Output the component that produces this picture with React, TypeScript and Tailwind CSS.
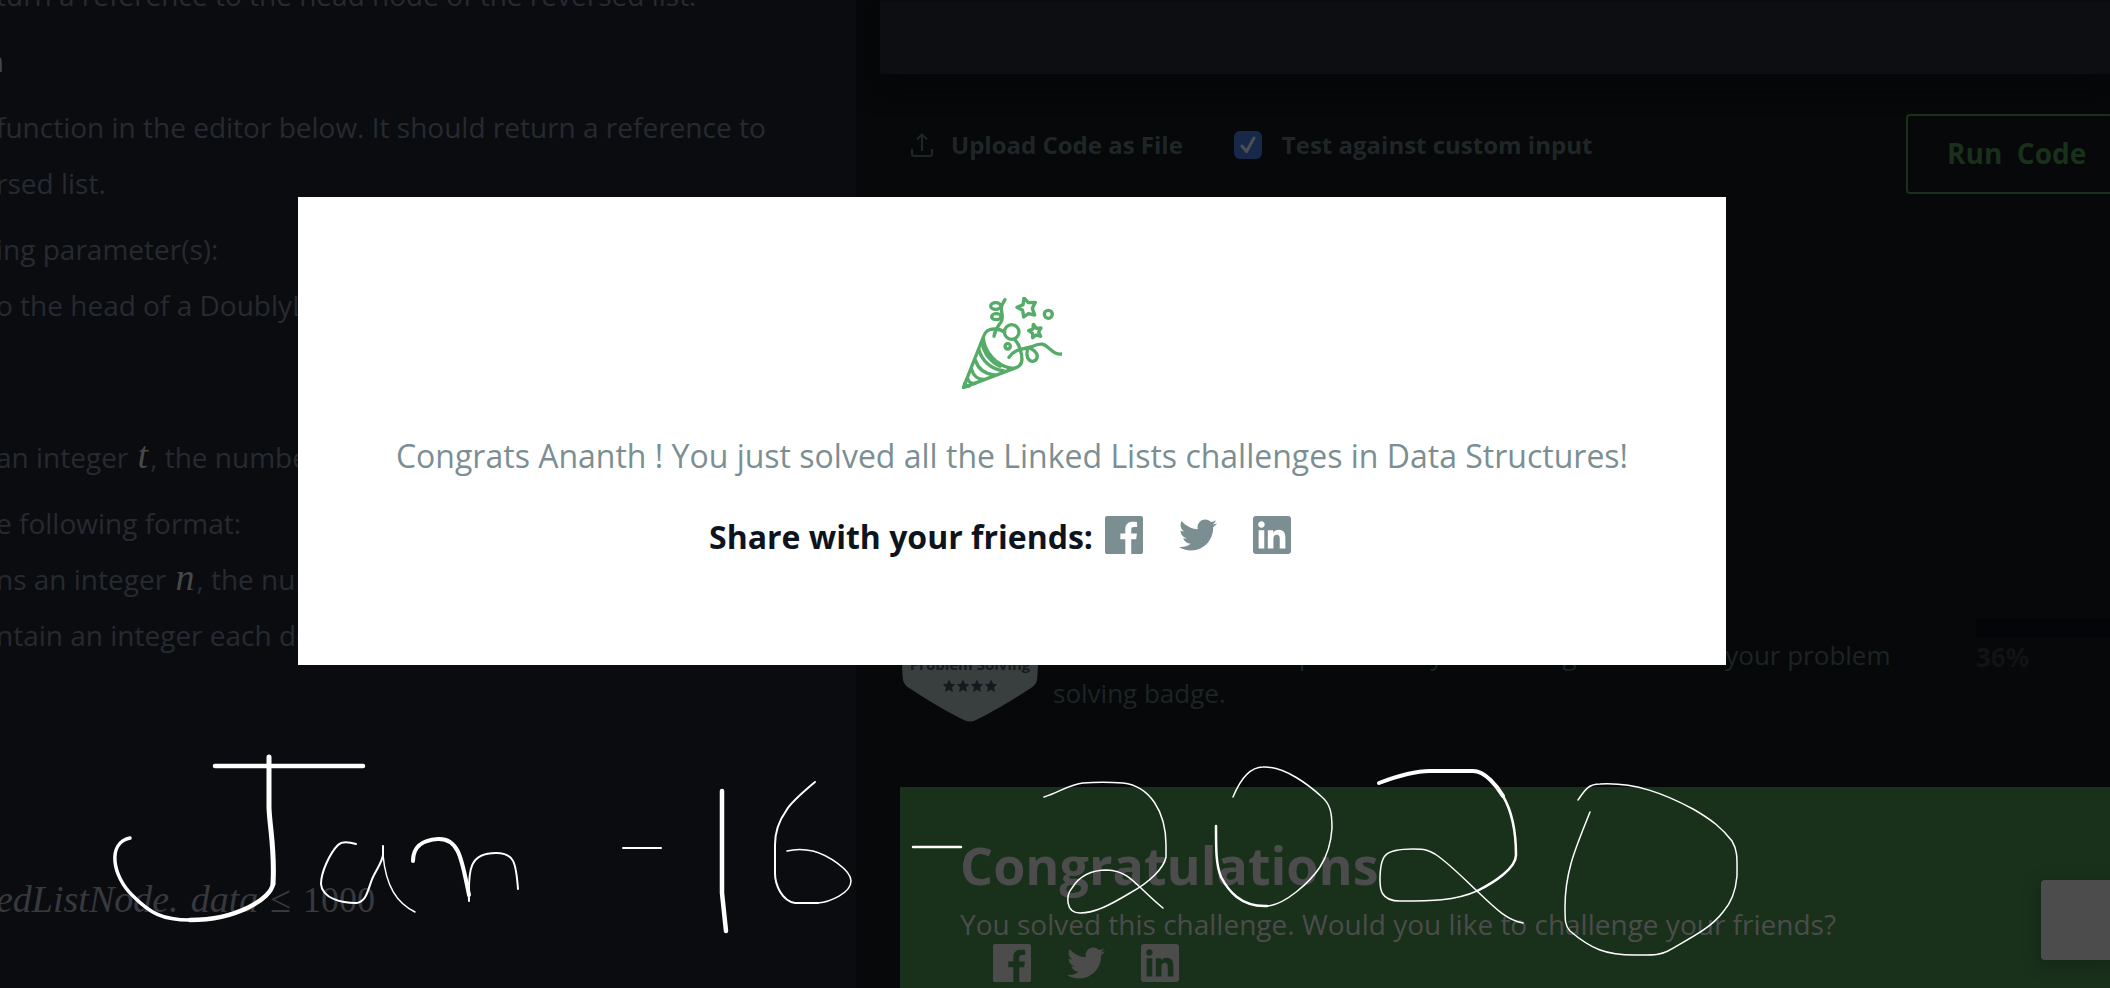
import React from "react";
import { FaTwitter } from "react-icons/fa";

const INK = [
  { w: 4.5, d: "M215 766H363" },
  { w: 5, d: "M269 757V808C270 830 275 850 273 884" },
  { w: 4.5, d: "M273 884C271 898 238 920 190 920" },
  { w: 3.5, d: "M190 920C162 920 150 913 133 896C112 876 107 843 130 838" },
  { w: 2, d: "M356 844C346 841 341 842 338 845C330 853 321 872 321 884C322 899 343 903 356 903C368 902 368 886 374 875C378 867 382 862 383 855V846" },
  { w: 1.5, d: "M383 855C386 887 397 903 415 912" },
  { w: 4, d: "M413 861C413 845 424 840 438 839C460 838 462 862 469 895" },
  { w: 2, d: "M469 901C468 868 470 853 496 853C514 853 516 862 518 889" },
  { w: 2, d: "M623 848H661" },
  { w: 4.5, d: "M722 791V893L726 931" },
  { w: 2, d: "M815 782C803 792 789 805 786 811C778 822 775 835 775 845V873C775 885 782 901 795 903H818" },
  { w: 1.5, d: "M818 903C830 902 851 893 851 881C851 870 828 855 813 851C804 849 795 849 787 851" },
  { w: 2.5, d: "M913 847H961" },
  { w: 1.5, d: "M1044 797C1058 793 1070 784 1083 783C1095 782 1110 782 1123 783C1150 786 1166 812 1166 845V857C1164 868 1150 882 1130 893C1110 905 1095 913 1080 913C1065 913 1066 895 1072 888C1080 875 1092 870 1107 870C1130 871 1135 885 1163 908" },
  { w: 1.5, d: "M1233 797C1240 780 1250 767 1263 767C1285 766 1310 786 1322 797C1330 804 1332 812 1332 828C1331 845 1327 856 1320 867C1310 882 1285 905 1267 906" },
  { w: 2.5, d: "M1267 906C1240 907 1228 890 1221 877C1216 865 1216 850 1216 826" },
  { w: 4, d: "M1379 783C1400 775 1415 771 1430 771H1473C1485 771 1497 786 1503 796" },
  { w: 2.5, d: "M1503 796C1514 815 1516 838 1516 855C1516 868 1495 882 1477 891" },
  { w: 1.5, d: "M1477 891C1455 901 1430 901 1400 901C1380 901 1380 888 1380 880C1380 855 1384 849 1413 849C1425 849 1428 850 1435 854C1450 864 1465 880 1477 891C1500 913 1508 920 1523 923" },
  { w: 1.5, d: "M1578 800C1585 790 1588 784 1600 784C1635 782 1665 794 1693 809C1712 820 1722 828 1732 841C1738 851 1737 860 1737 876C1736 888 1732 902 1723 912C1710 929 1690 938 1668 951C1660 955 1655 955 1640 955C1605 956 1590 948 1570 931C1565 926 1565 920 1565 907C1565 870 1577 845 1590 812" },
];

function Handwriting() {
  return (
    <svg
      className="pointer-events-none absolute top-0 left-0"
      width="2110"
      height="988"
      viewBox="0 0 2110 988"
      fill="none"
      stroke="#fff"
      strokeLinecap="round"
      strokeLinejoin="round"
      aria-hidden="true"
    >
      {INK.map((s) => (
        <path key={s.d} d={s.d} strokeWidth={s.w} />
      ))}
    </svg>
  );
}

function PartyIcon() {
  return (
    <svg
      className="h-[92px] w-[100px]"
      viewBox="126 81 300 276"
      fill="none"
      stroke="#55ab68"
      strokeWidth="10"
      strokeLinecap="round"
      strokeLinejoin="round"
      aria-hidden="true"
    >
      <path d="M130 353L190 201C196 181 208 176 228 177C238 178 246 181 254 186" />
      <path d="M284 208C292 217 298 228 301 240C308 262 310 286 288 293L130 353" />
      <path d="M190 205C194 242 226 290 280 295" />
      <path d="M187 222C192 250 212 276 240 289M177 240C186 272 212 297 250 302M167 272C174 296 194 311 224 315M155 298C160 318 175 328 192 328M143 325C145 336 154 342 166 340M134 341C136 346 141 349 148 348" />
      <circle cx="275" cy="186" r="22" />
      <circle cx="263" cy="229" r="8" />
      <circle cx="385" cy="133" r="12" />
      <path d="M312 84L325 98L346 97L337 115L344 135L325 131L311 141L308 121L291 112L309 104Z" />
      <path d="M340 163L349 175L363 174L356 186L362 199L349 195L338 203L338 190L326 182L339 177Z" />
      <path d="M255 89C250 98 244 104 244 114C244 128 250 140 245 152C242 162 226 172 222 199" />
      <ellipse cx="227" cy="108" rx="15" ry="10" />
      <ellipse cx="229" cy="140" rx="14" ry="9" />
      <path d="M267 262C288 233 314 238 335 230C372 213 378 228 391 238C402 249 410 254 426 252" />
      <path d="M322 240C318 256 323 274 338 274C352 273 355 257 348 248C343 241 336 237 328 234" />
    </svg>
  );
}

function FacebookIcon() {
  return (
    <svg className="size-[38px]" viewBox="0 0 24 24" fill="currentColor" aria-hidden="true">
      <path d="M22.675 0h-21.35c-.732 0-1.325.593-1.325 1.325v21.351c0 .731.593 1.324 1.325 1.324h11.495v-9.294h-3.128v-3.622h3.128v-2.671c0-3.1 1.893-4.788 4.659-4.788 1.325 0 2.463.099 2.795.143v3.24l-1.918.001c-1.504 0-1.795.715-1.795 1.763v2.313h3.587l-.467 3.622h-3.12v9.293h6.116c.73 0 1.323-.593 1.323-1.325v-21.35c0-.732-.593-1.325-1.325-1.325z" />
    </svg>
  );
}

function LinkedinIcon() {
  return (
    <svg className="size-[38px]" viewBox="0 0 24 24" fill="currentColor" aria-hidden="true">
      <path d="M20.447 20.452h-3.554v-5.569c0-1.328-.027-3.037-1.852-3.037-1.853 0-2.136 1.445-2.136 2.939v5.667H9.351V9h3.414v1.561h.046c.477-.9 1.637-1.85 3.37-1.85 3.601 0 4.267 2.37 4.267 5.455v6.286zM5.337 7.433c-1.144 0-2.063-.926-2.063-2.065 0-1.138.92-2.063 2.063-2.063 1.14 0 2.064.925 2.064 2.063 0 1.139-.925 2.065-2.064 2.065zm1.782 13.019H3.555V9h3.564v11.452zM22.225 0H1.771C.792 0 0 .774 0 1.729v20.542C0 23.227.792 24 1.771 24h20.451C23.2 24 24 23.227 24 22.271V1.729C24 .774 23.2 0 22.222 0h.003z" />
    </svg>
  );
}

function ShareLinks() {
  return (
    <div className="flex items-center gap-9">
      <a href="#facebook" aria-label="Share on Facebook">
        <FacebookIcon />
      </a>
      <a href="#twitter" aria-label="Share on Twitter">
        <FaTwitter className="size-[38px]" />
      </a>
      <a href="#linkedin" aria-label="Share on LinkedIn">
        <LinkedinIcon />
      </a>
    </div>
  );
}

function Var({ children }: { children: React.ReactNode }) {
  return (
    <i className="px-[2px] font-['Liberation_Serif',serif] text-[38px] leading-none text-[#47474a]">{children}</i>
  );
}

function ProblemStatement() {
  return (
    <section className="w-[856px] shrink-0 overflow-hidden bg-[#0b0c10] text-[28px] leading-[56px] whitespace-nowrap text-[#262a31]">
      <div className="-mt-[33px] -ml-1">
        <p>turn a reference to the head node of the reversed list.</p>
        <h2 className="-ml-[10px] leading-[76px] font-semibold text-[#47474a]">n</h2>
        <p>
          function in the editor below. It should return a reference to
          <br />
          rsed list.
        </p>
        <p className="mt-[10px]">
          ing parameter(s):
          <br />o the head of a DoublyLinkedListNode
        </p>
        <p className="mt-24">
          an integer <Var>t</Var>, the number of test cases.
        </p>
        <p className="mt-[10px]">
          e following format:
          <br />
          ns an integer <Var>n</Var>, the number of elements.
          <br />
          ntain an integer each denoting
        </p>
        <p className="mt-[208px] flex items-baseline font-['Liberation_Serif',serif] text-[36px] text-[#38393e]">
          <i className="text-[38px]">edListNode.</i>
          <i className="ml-3 text-[38px]">data</i>
          <span className="ml-3 text-[38px]">≤</span>
          <span className="ml-3">1000</span>
        </p>
      </div>
    </section>
  );
}

function Badge() {
  return (
    <svg className="h-[154px] w-[138px] shrink-0" viewBox="0 0 138 154" role="img" aria-label="Problem Solving badge">
      <path
        d="M69 0C66 0 6 36 3 40C0 60 0 92 2 112C3 116 5 118 8 120C28 133 50 146 63 152C67 154 71 154 75 152C88 146 110 133 130 120C133 118 135 116 136 112C138 92 138 60 135 40C132 36 72 0 69 0Z"
        fill="#393e3f"
      />
      <text
        x="69"
        y="102"
        textAnchor="middle"
        fontSize="15"
        fontWeight="700"
        fontFamily="Open Sans, sans-serif"
        fill="#16191e"
      >
        Problem Solving
      </text>
      {[48, 62, 76, 90].map((x) => (
        <path
          key={x}
          transform={`translate(${x} 118)`}
          d="M0 -6.500L2 -2.200L6.200 -1.800L3 1.300L4 6L0 3.700L-4 6L-3 1.300L-6.200 -1.800L-2 -2.200Z"
          fill="#16191e"
        />
      ))}
    </svg>
  );
}

function Workspace() {
  return (
    <main className="flex min-w-0 flex-1 flex-col overflow-hidden bg-[#07080a]">
      <div className="ml-6 h-[74px] shrink-0 border-t-2 border-[#0a0b0f] bg-[#0d0e12] shadow-[0_10px_28px_#050609]" />

      <div className="mt-10 flex shrink-0 justify-between pl-[55px] text-2xl font-bold text-[#1f2627]">
        <div className="flex h-[62px] items-center">
          <button type="button" className="flex items-center gap-[18px]">
            <svg className="h-6 w-[22px]" viewBox="0 0 22 24" fill="none" stroke="currentColor" strokeWidth="2" aria-hidden="true">
              <path d="M11 18V2M6 6.500L11 1.500L16 6.500M1 16V21C1 22.500 1.500 23 3 23H19C20.500 23 21 22.500 21 21V16" />
            </svg>
            Upload Code as File
          </button>
          <label className="ml-[51px] flex items-center gap-5">
            <span className="grid size-7 place-items-center">
              <input
                type="checkbox"
                defaultChecked
                className="col-start-1 row-start-1 size-7 appearance-none rounded-md bg-[#182849]"
              />
              <svg className="col-start-1 row-start-1 h-[18px] w-4" viewBox="0 0 16 18" fill="none" stroke="#4d4f54" strokeWidth="3" strokeLinecap="round" strokeLinejoin="round" aria-hidden="true">
                <path d="M2 10L6.500 15.500L14 2" />
              </svg>
            </span>
            Test against custom input
          </label>
        </div>
        <button
          type="button"
          className="-mr-2 h-20 w-[212px] rounded border-2 border-[#19301b] pl-[39px] text-left text-[28px] font-bold text-[#19301b]"
        >
          Run&nbsp; Code
        </button>
      </div>

      <div className="mt-[374px] flex shrink-0 pl-[45px]">
        <Badge />
        <p className="ml-[14px] w-[880px] pt-[68px] text-[26px] leading-[38px] text-[#1d2425]">
          You are now 122.65 points away from the gold level for your problem
          <br />
          solving badge.
        </p>
        <div className="ml-auto w-[134px] pt-[50px] text-[26px] leading-[38px] font-bold text-[#121316]">
          <div className="h-5 bg-[#030508]" />
          36%
        </div>
      </div>

      <div className="mt-[65px] ml-11 flex flex-1 justify-between bg-[#19301b] pt-[50px] pl-[60px] text-[#4c4c4c]">
        <div className="shrink-0">
          <h2 className="text-[52px] leading-[56px] font-bold">Congratulations</h2>
          <p className="mt-3 text-[28px] leading-[39px]">
            You solved this challenge. Would you like to challenge your friends?
          </p>
          <div className="pl-[33px]">
            <ShareLinks />
          </div>
        </div>
        <button
          type="button"
          aria-label="Next Challenge"
          className="mt-[43px] h-20 w-[69px] rounded-l bg-[#4c4c4c] shadow-[0_4px_16px_#142717]"
        />
      </div>
    </main>
  );
}

function CongratsDialog() {
  return (
    <div className="absolute inset-0 flex items-start justify-center pt-[197px] pr-[86px]">
      <div
        role="dialog"
        aria-label="Congrats"
        className="flex h-[468px] w-full max-w-[1428px] flex-col items-center bg-white pt-[100px]"
      >
        <PartyIcon />
        <p className="mt-10 text-[32px] leading-[54px] text-[#7b8f93]">
          Congrats Ananth ! You just solved all the Linked Lists challenges in Data Structures!
        </p>
        <div className="mt-[27px] flex items-start gap-3 pr-6">
          <strong className="text-[32px] leading-[54px] font-bold text-[#0e141e]">
            Share with your friends:
          </strong>
          <div className="pt-[6px] text-[#7b8f93]">
            <ShareLinks />
          </div>
        </div>
      </div>
    </div>
  );
}

export default function App() {
  return (
    <div className="relative flex h-screen overflow-hidden bg-[#07080a] font-['Open_Sans',sans-serif]">
      <ProblemStatement />
      <Workspace />
      <CongratsDialog />
      <Handwriting />
    </div>
  );
}
